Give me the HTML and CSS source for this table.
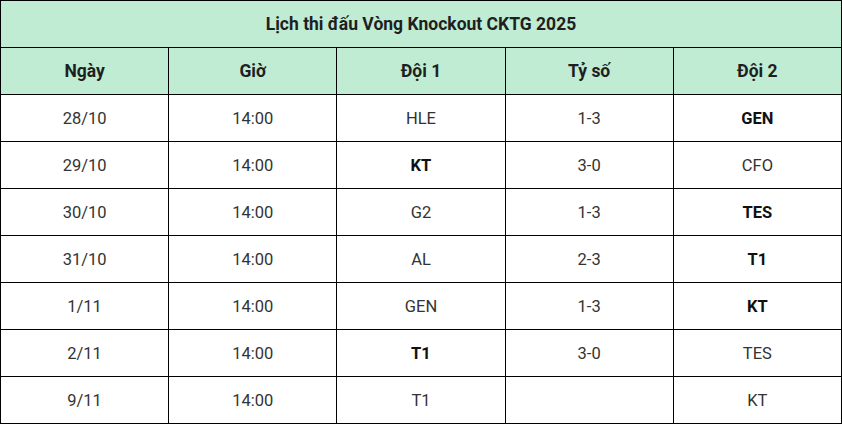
FILE: index.html
```html
<!DOCTYPE html>
<html lang="vi">
<head>
<meta charset="utf-8">
<link rel="stylesheet" href="styles.css">
</head>
<body>
<table class="schedule">
  <thead>
    <tr class="title-row"><th colspan="5">Lịch thi đấu Vòng Knockout CKTG 2025</th></tr>
    <tr class="head-row"><th>Ngày</th><th>Giờ</th><th>Đội 1</th><th>Tỷ số</th><th>Đội 2</th></tr>
  </thead>
  <tbody>
    <tr><td>28/10</td><td>14:00</td><td>HLE</td><td>1-3</td><td class="win">GEN</td></tr>
    <tr><td>29/10</td><td>14:00</td><td class="win">KT</td><td>3-0</td><td>CFO</td></tr>
    <tr><td>30/10</td><td>14:00</td><td>G2</td><td>1-3</td><td class="win">TES</td></tr>
    <tr><td>31/10</td><td>14:00</td><td>AL</td><td>2-3</td><td class="win">T1</td></tr>
    <tr><td>1/11</td><td>14:00</td><td>GEN</td><td>1-3</td><td class="win">KT</td></tr>
    <tr><td>2/11</td><td>14:00</td><td class="win">T1</td><td>3-0</td><td>TES</td></tr>
    <tr><td>9/11</td><td>14:00</td><td>T1</td><td></td><td>KT</td></tr>
  </tbody>
</table>
</body>
</html>
```
FILE: styles.css
```css
html, body {
  margin: 0;
  padding: 0;
  background: #ffffff;
}
.schedule {
  border-collapse: collapse;
  width: 842px;
  table-layout: fixed;
  font-family: Roboto, "Noto Sans", sans-serif;
  font-size: 16px;
  color: #222222;
}
.schedule th,
.schedule td {
  border: 1px solid #000000;
  height: 46px;
  padding: 0;
  text-align: center;
  vertical-align: middle;
}
.schedule th {
  background: #c0ecd3;
  font-weight: 700;
  font-size: 17.5px;
  color: #1f1f1f;
}
.schedule td {
  font-weight: 400;
  font-size: 16.5px;
  color: #333333;
}
.schedule td.win {
  font-weight: 700;
  color: #111111;
}
```
